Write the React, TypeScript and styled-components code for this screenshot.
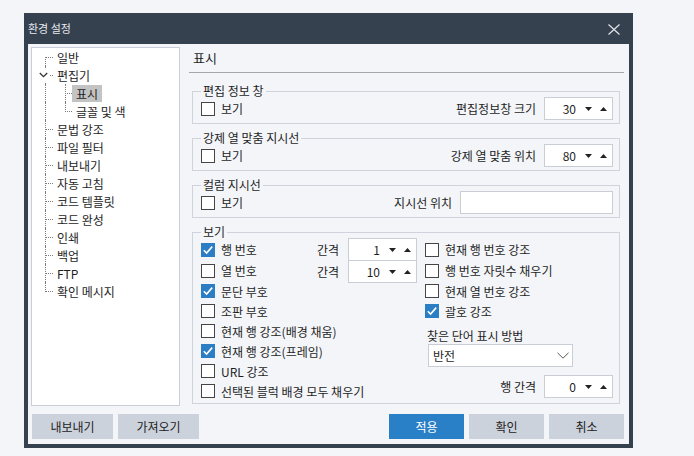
import React from 'react';
import styled, { createGlobalStyle } from 'styled-components';

const Global = createGlobalStyle`
  html, body { margin: 0; padding: 0; background: #f4f5f9; }
  body {
    font-family: "Noto Sans CJK KR", "Noto Sans", sans-serif;
    font-size: 12px;
    color: #1e1e1e;
  }
  * { box-sizing: border-box; }
`;

const Page = styled.div`
  padding: 13px 0 0 24px;
`;

const Dialog = styled.div`
  width: 609px;
  height: 435px;
  background: #364150;
  padding: 0 4px 4px;
  display: flex;
  flex-direction: column;
`;

const TitleBar = styled.div`
  height: 31px;
  flex: none;
  display: flex;
  align-items: center;
  justify-content: space-between;
  padding: 0 9px 1px 0;
  color: #e6e9ee;
  font-size: 11px;
`;

const CloseIcon = styled.svg`
  display: block;
  margin-top: 2px;
`;

const Body = styled.div`
  flex: 1;
  background: #f3f5f9;
  padding: 3px 5px 5px 3px;
  display: flex;
  flex-direction: column;
`;

const Main = styled.div`
  display: flex;
  height: 359px;
  gap: 9px;
`;

const Tree = styled.div`
  width: 149px;
  flex: none;
  background: #ffffff;
  border: 1px solid #c9cfd8;
  padding-top: 0;
  display: flex;
  flex-direction: column;
`;

const TreeRow = styled.div`
  display: flex;
  align-items: center;
  height: 18px;
`;

type Kind = 'first' | 'mid' | 'last';

const Connector = styled.span<{ $w: number; $x: number; $kind: Kind; $noArm?: boolean }>`
  position: relative;
  flex: none;
  width: ${(p) => p.$w}px;
  height: 18px;
  &::before {
    content: '';
    position: absolute;
    left: ${(p) => p.$x}px;
    top: ${(p) => (p.$kind === 'first' ? 9 : 0)}px;
    bottom: ${(p) => (p.$kind === 'last' ? 8 : 0)}px;
    border-left: 1px dotted #7d7d7d;
  }
  &::after {
    content: '';
    display: ${(p) => (p.$noArm ? 'none' : 'block')};
    position: absolute;
    left: ${(p) => p.$x}px;
    right: 0;
    top: 9px;
    border-top: 1px dotted #7d7d7d;
  }
`;

const Expander = styled.span`
  position: absolute;
  left: 6px;
  top: 2px;
  width: 11px;
  height: 14px;
  background: #ffffff;
  display: flex;
  align-items: center;
  justify-content: center;
  z-index: 1;
`;

const Item = styled.span<{ $selected?: boolean }>`
  height: 17px;
  line-height: 17px;
  padding: 0 4px;
  white-space: nowrap;
  color: #1e1e1e;
  background: ${(p) => (p.$selected ? '#c3c3c3' : 'transparent')};
`;

const Content = styled.div`
  flex: 1;
  min-width: 0;
  display: flex;
  flex-direction: column;
`;

const Header = styled.div`
  height: 26px;
  flex: none;
  border-bottom: 1px solid #a3a6ab;
  padding: 2px 0 0 4px;
  font-size: 13px;
  line-height: 18px;
`;

const Groups = styled.div`
  display: flex;
  flex-direction: column;
  gap: 8px;
  padding: 12px 4px 0 3px;
`;

const Group = styled.fieldset<{ $pt?: number; $pb?: number }>`
  margin: 0;
  min-width: 0;
  border: 1px solid #cfd4dc;
  padding: ${(p) => p.$pt ?? 0}px 6px ${(p) => p.$pb ?? 3}px 8px;
`;

const Legend = styled.legend`
  padding: 0 2px;
  font-size: 12px;
  line-height: 12px;
  color: #1e1e1e;
`;

const GroupRow = styled.div`
  display: flex;
  align-items: center;
  justify-content: space-between;
  height: 23px;
`;

const Pair = styled.div`
  display: flex;
  align-items: center;
  gap: 8px;
  white-space: nowrap;
`;

const CheckLabel = styled.label<{ $h?: number }>`
  display: flex;
  align-items: center;
  gap: 6px;
  height: ${(p) => p.$h ?? 20}px;
  white-space: nowrap;
  flex: none;
`;

const Box = styled.span<{ $checked?: boolean }>`
  width: 14px;
  height: 14px;
  flex: none;
  border: 1px solid ${(p) => (p.$checked ? '#2c7ec4' : '#454545')};
  background: ${(p) => (p.$checked ? '#2c7ec4' : '#ffffff')};
  display: flex;
  align-items: center;
  justify-content: center;
`;

const SpinBox = styled.div`
  width: 69px;
  height: 23px;
  flex: none;
  background: #ffffff;
  border: 1px solid #c9ced6;
  display: flex;
  align-items: center;
  justify-content: flex-end;
  padding-right: 5px;
`;

const SpinValue = styled.span`
  margin-right: 9px;
`;

const Tri = styled.svg<{ $gap?: number }>`
  display: block;
  flex: none;
  margin-right: ${(p) => p.$gap ?? 0}px;
`;

const TextField = styled.div`
  width: 153px;
  height: 23px;
  background: #ffffff;
  border: 1px solid #c9ced6;
`;

const ViewGrid = styled.div`
  display: flex;
  align-items: flex-start;
`;

const LeftCol = styled.div`
  width: 116px;
  flex: none;
  display: flex;
  flex-direction: column;
`;

const MidCol = styled.div`
  width: 100px;
  flex: none;
  margin-top: -1px;
  display: flex;
  flex-direction: column;
`;

const SpinLine = styled.div<{ $stacked?: boolean }>`
  display: flex;
  align-items: center;
  justify-content: space-between;
  margin-top: ${(p) => (p.$stacked ? -1 : 0)}px;
`;

const RightCol = styled.div`
  flex: 1;
  margin-left: 8px;
  display: flex;
  flex-direction: column;
`;

const FindLabel = styled.div`
  margin-top: 7px;
  line-height: 16px;
  padding-left: 2px;
`;

const Select = styled.div`
  width: 145px;
  height: 23px;
  margin-left: 3px;
  background: #ffffff;
  border: 1px solid #c9ced6;
  display: flex;
  align-items: center;
  justify-content: space-between;
  padding: 0 3px 0 4px;
`;

const SpacingRow = styled.div`
  margin-top: 8px;
  display: flex;
  align-items: center;
  justify-content: flex-end;
  gap: 8px;
`;

const Footer = styled.div`
  margin-top: 8px;
  padding-left: 1px;
  display: flex;
  justify-content: space-between;
`;

const ButtonGroup = styled.div`
  display: flex;
  gap: 5px;
`;

const Button = styled.button<{ $w: number; $primary?: boolean }>`
  width: ${(p) => p.$w}px;
  height: 25px;
  border: none;
  padding: 0;
  font-family: inherit;
  font-size: 12px;
  color: ${(p) => (p.$primary ? '#ffffff' : '#222222')};
  background: ${(p) => (p.$primary ? '#2a80c6' : '#ccd2dc')};
`;

const Check = ({ checked, label, h }: { checked?: boolean; label: string; h?: number }) => (
  <CheckLabel $h={h}>
    <Box $checked={checked}>
      {checked && (
        <svg width="12" height="12" viewBox="0 0 12 12">
          <path d="M1.8 6.2 L4.6 9 L10.2 2.6" fill="none" stroke="#ffffff" strokeWidth="1.6" />
        </svg>
      )}
    </Box>
    <span>{label}</span>
  </CheckLabel>
);

const Spin = ({ value }: { value: number }) => (
  <SpinBox>
    <SpinValue>{value}</SpinValue>
    <Tri width="7" height="4" viewBox="0 0 7 4" $gap={8}>
      <path d="M0 0 H7 L3.5 4 Z" fill="#222" />
    </Tri>
    <Tri width="7" height="4" viewBox="0 0 7 4">
      <path d="M0 4 H7 L3.5 0 Z" fill="#222" />
    </Tri>
  </SpinBox>
);

const L1 = ({ kind, label, children }: { kind: Kind; label: string; children?: React.ReactNode }) => (
  <TreeRow>
    <Connector $w={21} $x={13} $kind={kind}>
      {children}
    </Connector>
    <Item>{label}</Item>
  </TreeRow>
);

const L2 = ({ kind, label, selected }: { kind: Kind; label: string; selected?: boolean }) => (
  <TreeRow>
    <Connector $w={21} $x={13} $kind="mid" $noArm />
    <Connector $w={19} $x={12} $kind={kind} />
    <Item $selected={selected}>{label}</Item>
  </TreeRow>
);

export default function App() {
  return (
    <>
      <Global />
      <Page>
        <Dialog>
          <TitleBar>
            <span>환경 설정</span>
            <CloseIcon width="12" height="11" viewBox="0 0 12 11">
              <path d="M0.5 0.5 L11.5 10.5 M11.5 0.5 L0.5 10.5" stroke="#e6e9ee" strokeWidth="1.1" fill="none" />
            </CloseIcon>
          </TitleBar>
          <Body>
            <Main>
              <Tree>
                <L1 kind="first" label="일반" />
                <L1 kind="mid" label="편집기">
                  <Expander>
                    <svg width="9" height="6" viewBox="0 0 9 6">
                      <path d="M0.8 1 L4.5 4.7 L8.2 1" fill="none" stroke="#333" strokeWidth="1.3" />
                    </svg>
                  </Expander>
                </L1>
                <L2 kind="mid" label="표시" selected />
                <L2 kind="last" label="글꼴 및 색" />
                <L1 kind="mid" label="문법 강조" />
                <L1 kind="mid" label="파일 필터" />
                <L1 kind="mid" label="내보내기" />
                <L1 kind="mid" label="자동 고침" />
                <L1 kind="mid" label="코드 템플릿" />
                <L1 kind="mid" label="코드 완성" />
                <L1 kind="mid" label="인쇄" />
                <L1 kind="mid" label="백업" />
                <L1 kind="mid" label="FTP" />
                <L1 kind="last" label="확인 메시지" />
              </Tree>
              <Content>
                <Header>표시</Header>
                <Groups>
                  <Group>
                    <Legend>편집 정보 창</Legend>
                    <GroupRow>
                      <Check label="보기" />
                      <Pair>
                        <span>편집정보창 크기</span>
                        <Spin value={30} />
                      </Pair>
                    </GroupRow>
                  </Group>
                  <Group>
                    <Legend>강제 열 맞춤 지시선</Legend>
                    <GroupRow>
                      <Check label="보기" />
                      <Pair>
                        <span>강제 열 맞춤 위치</span>
                        <Spin value={80} />
                      </Pair>
                    </GroupRow>
                  </Group>
                  <Group>
                    <Legend>컬럼 지시선</Legend>
                    <GroupRow>
                      <Check label="보기" />
                      <Pair>
                        <span>지시선 위치</span>
                        <TextField />
                      </Pair>
                    </GroupRow>
                  </Group>
                  <Group $pt={1} $pb={2}>
                    <Legend>보기</Legend>
                    <ViewGrid>
                      <LeftCol>
                        <Check checked label="행 번호" h={21} />
                        <Check label="열 번호" h={21} />
                        <Check checked label="문단 부호" />
                        <Check label="조판 부호" />
                        <Check label="현재 행 강조(배경 채움)" />
                        <Check checked label="현재 행 강조(프레임)" />
                        <Check label="URL 강조" />
                        <Check label="선택된 블럭 배경 모두 채우기" />
                      </LeftCol>
                      <MidCol>
                        <SpinLine>
                          <span>간격</span>
                          <Spin value={1} />
                        </SpinLine>
                        <SpinLine $stacked>
                          <span>간격</span>
                          <Spin value={10} />
                        </SpinLine>
                      </MidCol>
                      <RightCol>
                        <Check label="현재 행 번호 강조" h={21} />
                        <Check label="행 번호 자릿수 채우기" h={21} />
                        <Check label="현재 열 번호 강조" />
                        <Check checked label="괄호 강조" />
                        <FindLabel>찾은 단어 표시 방법</FindLabel>
                        <Select>
                          <span>반전</span>
                          <svg width="12" height="7" viewBox="0 0 12 7">
                            <path d="M0.5 0.8 L6 6.2 L11.5 0.8" fill="none" stroke="#5a5a5a" strokeWidth="1" />
                          </svg>
                        </Select>
                        <SpacingRow>
                          <span>행 간격</span>
                          <Spin value={0} />
                        </SpacingRow>
                      </RightCol>
                    </ViewGrid>
                  </Group>
                </Groups>
              </Content>
            </Main>
            <Footer>
              <ButtonGroup>
                <Button $w={81}>내보내기</Button>
                <Button $w={81}>가져오기</Button>
              </ButtonGroup>
              <ButtonGroup>
                <Button $w={75} $primary>적용</Button>
                <Button $w={75}>확인</Button>
                <Button $w={75}>취소</Button>
              </ButtonGroup>
            </Footer>
          </Body>
        </Dialog>
      </Page>
    </>
  );
}
